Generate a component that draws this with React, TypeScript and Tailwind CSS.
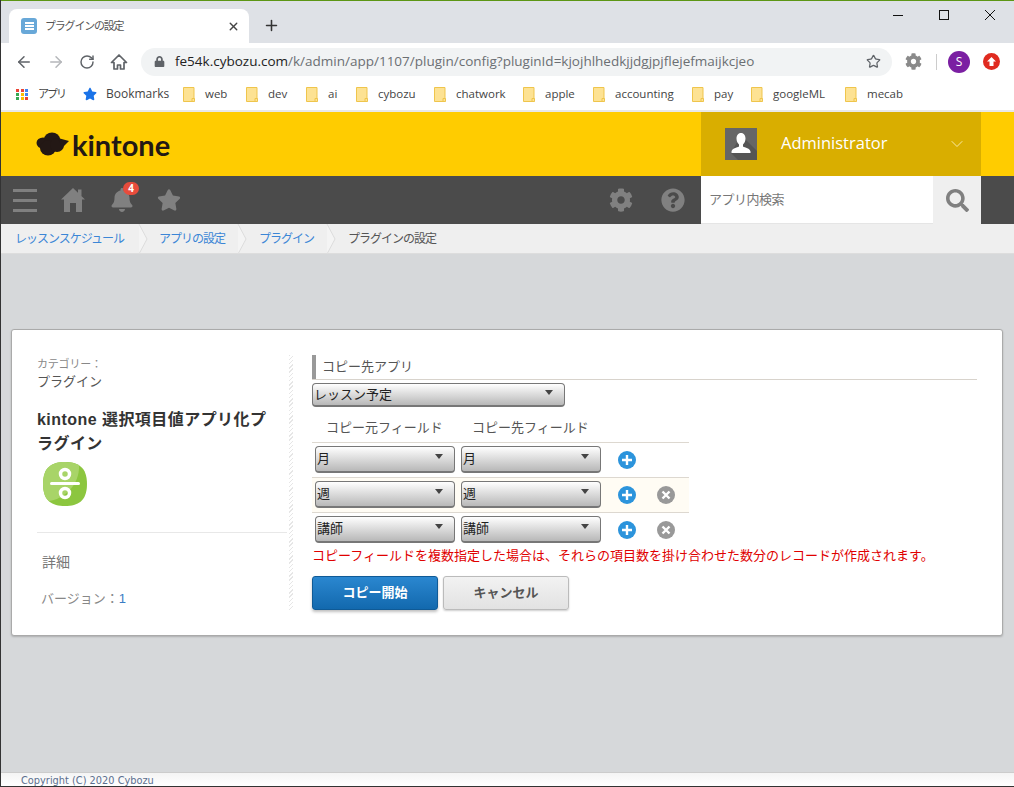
import { ArrowLeft, ArrowRight, ChevronDown, Plus, RotateCw, Star, X } from "lucide-react";
import { FaBell, FaCog, FaLock, FaQuestionCircle, FaSearch, FaStar } from "react-icons/fa";

const FONT = "font-['Open_Sans','Noto_Sans_CJK_JP',sans-serif]";
const JP = "font-['Liberation_Sans','Noto_Sans_CJK_JP',sans-serif]";

const folders = [
  ["web", "w-[63px]"],
  ["dev", "w-[60px]"],
  ["ai", "w-[50px]"],
  ["cybozu", "w-[78px]"],
  ["chatwork", "w-[89px]"],
  ["apple", "w-[70px]"],
  ["accounting", "w-[99px]"],
  ["pay", "w-[59px]"],
  ["googleML", "w-[94px]"],
  ["mecab", ""],
];

const Folder = () => (
  <svg width="12" height="15" viewBox="0 0 12 15" className="shrink-0">
    <path d="M.5.5h10.5v14H.5z" fill="#fde293" stroke="#efc54c" />
    <path d="M9 11.5h2.5v3H9z" fill="#fde293" stroke="#efc54c" />
  </svg>
);

const Select = ({ value, className }: { value: string; className: string }) => (
  <div className={`${className} flex items-center justify-between rounded-[4px] border border-[#777] border-b-2 bg-linear-to-b from-white to-[#b8b8b8] pl-[1px] pr-[11px] text-[13px] text-[#222] ${JP}`}>
    <span>{value}</span>
    <span className="mb-[5px] h-0 w-0 border-x-[4px] border-t-[5px] border-x-transparent border-t-[#444]" />
  </div>
);

const AddButton = () => (
  <svg width="18" height="18" viewBox="0 0 18 18" className="shrink-0">
    <circle cx="9" cy="9" r="9" fill="#2c94dc" />
    <path d="M4 9h10M9 4v10" stroke="#fff" strokeWidth="2.4" />
  </svg>
);

const RemoveButton = () => (
  <svg width="18" height="18" viewBox="0 0 18 18" className="ml-[21px] shrink-0">
    <circle cx="9" cy="9" r="9" fill="#999" />
    <path d="M5.5 5.5l7 7M12.5 5.5l-7 7" stroke="#fff" strokeWidth="2.4" />
  </svg>
);

const Row = ({ value, removable, tinted }: { value: string; removable?: boolean; tinted?: boolean }) => (
  <div className={`flex h-[35px] items-center border-t border-[#ddd8d0] pb-[1px] pl-[3px] ${tinted ? "bg-[#fffcf4]" : ""}`}>
    <Select value={value} className="h-[27px] w-[140px]" />
    <Select value={value} className="ml-[6px] h-[27px] w-[140px]" />
    <div className="ml-[17px] flex">
      <AddButton />
    </div>
    {removable && <RemoveButton />}
  </div>
);

const Crumb = () => (
  <svg width="10" height="30" viewBox="0 0 10 30" className="shrink-0">
    <path d="M1 0l8 15-8 15" fill="#f4f4f4" stroke="#dcdcdc" />
  </svg>
);

const App = () => {
  return (
    <div className={`flex h-[787px] w-[1014px] flex-col overflow-hidden border-l border-[#333] bg-[#d6d8da] ${FONT}`}>
      {/* browser chrome */}
      <div className="h-px w-full shrink-0 bg-[#5c9615]" />
      <div className="flex h-[42px] shrink-0 items-end bg-[#dee1e6] pl-[8px]">
        <div className="flex h-[34px] w-[240px] items-center rounded-t-[8px] bg-white pl-[12px] pr-[9px]">
          <div className="flex h-[16px] w-[16px] flex-col items-center justify-center gap-px rounded-[3px] bg-[#68a8d8]">
            <div className="h-[2px] w-[9px] bg-white" />
            <div className="h-[2px] w-[9px] bg-white" />
            <div className="h-[2px] w-[9px] bg-white" />
          </div>
          <span className={`ml-[8px] flex-1 text-[11px] tracking-[-1.2px] text-[#555] ${JP}`}>プラグインの設定</span>
          <X size={13} strokeWidth={2.5} className="text-[#444]" />
        </div>
        <Plus size={17} strokeWidth={2.2} className="mb-[9px] ml-[14px] text-[#333]" />
        <div className="mb-[21px] ml-auto mr-[19px] flex items-center gap-[36px] text-[#111]">
          <div className="h-px w-[10px] bg-[#111]" />
          <div className="h-[10px] w-[10px] border border-[#111]" />
          <svg width="10" height="14" viewBox="0 0 10 14">
            <path d="M0 2l10 10M10 2L0 12" stroke="#111" strokeWidth="1" />
          </svg>
        </div>
      </div>
      <div className="flex h-[37px] shrink-0 items-center bg-white pl-[14px] text-[#5f6368]">
        <ArrowLeft size={18} strokeWidth={2} />
        <ArrowRight size={18} strokeWidth={2} className="ml-[14px] text-[#b5b7ba]" />
        <RotateCw size={16} strokeWidth={2.2} className="ml-[14px]" />
        <svg width="18" height="18" viewBox="0 0 18 18" className="ml-[15px]">
          <path d="M1.500 9.500L9 2l7.500 7.500H14V16h-3.500v-4h-3v4H4V9.500z" fill="none" stroke="#5f6368" strokeWidth="1.700" strokeLinejoin="round" />
        </svg>
        <div className="ml-[13px] flex h-[28px] w-[751px] items-center rounded-full bg-[#f1f3f4] pl-[13px] pr-[11px]">
          <FaLock size={11} className="text-[#5f6368]" />
          <span className="ml-[10px] flex-1 text-[13.5px] text-[#6b6f73]">
            <span className="text-[#222]">fe54k.cybozu.com</span>/k/admin/app/1107/plugin/config?pluginId=kjojhlhedkjjdgjpjflejefmaijkcjeo
          </span>
          <Star size={15} strokeWidth={2} />
        </div>
        <FaCog size={17} className="ml-[13px] text-[#8a8a8a]" />
        <div className="ml-[14px] h-[16px] w-px bg-[#ccc]" />
        <div className="ml-[11px] flex h-[22px] w-[22px] items-center justify-center rounded-full bg-[#7b1fa2] text-[12px] text-white">S</div>
        <div className="ml-[13px] flex h-[17px] w-[17px] items-center justify-center rounded-full bg-[#e02b20]">
          <svg width="9" height="9" viewBox="0 0 9 9">
            <path d="M4.500 0L9 4.500H6.500V9h-4V4.500H0z" fill="#fff" />
          </svg>
        </div>
      </div>
      <div className={`flex h-[30px] shrink-0 items-center bg-white pb-[2px] pl-[15px] text-[11.5px] text-[#444] ${FONT}`}>
        <div className="grid w-[13px] grid-cols-3 gap-px">
          {["#ea4335", "#ea4335", "#4285f4", "#34a853", "#fbbc04", "#4285f4", "#34a853", "#fbbc04", "#ea4335"].map((c, i) => (
            <div key={i} className="h-[3px] w-[3px]" style={{ background: c }} />
          ))}
        </div>
        <span className={`ml-[9px] w-[45px] text-[11px] tracking-[-2px] ${JP}`}>アプリ</span>
        <FaStar size={14} className="text-[#1a73e8]" />
        <span className="ml-[9px] w-[77px] text-[12px]">Bookmarks</span>
        {folders.map(([name, width]) => (
          <div key={name} className={`flex shrink-0 items-center gap-[10px] ${width}`}>
            <Folder />
            <span>{name}</span>
          </div>
        ))}
      </div>

      {/* kintone header */}
      <div className="h-[2px] shrink-0 bg-[#e8e8e8]" />
      <div className="flex h-[64px] shrink-0 bg-[#ffcc00]">
        <div className="flex w-[700px] items-center pl-[35px]">
          <svg width="34" height="24" viewBox="0 0 34 24">
            <g fill="#231815">
              <ellipse cx="7" cy="11" rx="6.500" ry="5.500" />
              <ellipse cx="16" cy="7.500" rx="8" ry="7" />
              <ellipse cx="12" cy="16" rx="8" ry="7.500" />
              <ellipse cx="21" cy="13" rx="7" ry="7" />
              <path d="M22 6l11 3-7 7z" />
            </g>
          </svg>
          <span className="ml-[2px] font-['Lato',sans-serif] text-[29px] font-bold leading-none text-[#231815]">kintone</span>
        </div>
        <div className="flex w-[280px] items-center bg-[#d9ae00] pl-[24px]">
          <div className="flex h-[32px] w-[32px] items-center justify-center bg-[#666]">
            <svg width="32" height="32" viewBox="0 0 32 32">
              <path d="M6 25l10-18 16 16v9H13z" fill="#555" />
              <path d="M16 5c3 0 4.500 2.500 4.500 5.500 0 2.500-1 4.500-2.500 6v2c2 1 7 2 7.500 5v1.500h-19V23.500c.5-3 5.500-4 7.500-5v-2C12.500 15 11.500 13 11.500 10.500 11.500 7.500 13 5 16 5z" fill="#fff" />
            </svg>
          </div>
          <span className="mb-[2px] ml-[24px] text-[16.5px] text-white">Administrator</span>
          <ChevronDown size={20} strokeWidth={1} className="ml-[60px] text-[#fff5c4]" />
        </div>
      </div>
      <div className="flex h-[48px] shrink-0 items-center bg-[#4b4b4b] text-[#808080]">
        <div className="ml-[12px] flex w-[24px] flex-col gap-[7px]">
          <div className="h-[3px] bg-[#808080]" />
          <div className="h-[3px] bg-[#808080]" />
          <div className="h-[3px] bg-[#808080]" />
        </div>
        <svg width="24" height="24" viewBox="0 0 24 24" className="ml-[24px]">
          <path d="M12 0l12 11.500h-3V24h-6v-9H9v9H3V11.500H0zM17 1.500h3.500V8L17 5z" fill="#808080" />
        </svg>
        <div className="relative ml-[25px]">
          <FaBell size={24} />
          <span className="absolute -right-[5px] -top-[6px] flex h-[13px] w-[16px] items-center justify-center rounded-full bg-[#e74c3c] text-[10px] font-bold text-white">4</span>
        </div>
        <FaStar size={24} className="ml-[23px]" />
        <FaCog size={24} className="ml-auto" />
        <FaQuestionCircle size={24} className="ml-[28px]" />
        <div className="ml-[16px] flex h-full w-[232px] items-center bg-white pl-[8px] shadow-[inset_0_-1px_0_#e5e5e5]">
          <span className={`text-[13px] tracking-[-0.5px] text-[#777] ${JP}`}>アプリ内検索</span>
        </div>
        <div className="flex h-full w-[48px] items-center justify-center bg-[#efefef]">
          <FaSearch size={23} />
        </div>
        <div className="w-[33px]" />
      </div>
      <div className={`flex h-[30px] shrink-0 items-center border-b border-[#ddd] bg-[#efefef] pl-[14px] text-[12px] tracking-[-1px] ${JP}`}>
        <span className="w-[123px] text-[#3b86d6]">レッスンスケジュール</span>
        <Crumb />
        <span className="ml-[11px] w-[78px] text-[#3b86d6]">アプリの設定</span>
        <Crumb />
        <span className="ml-[12px] w-[67px] text-[#3b86d6]">プラグイン</span>
        <Crumb />
        <span className="ml-[12px] text-[#555]">プラグインの設定</span>
      </div>

      {/* page */}
      <div className={`flex-1 pl-[10px] pt-[75px] ${JP}`}>
        <div className="flex h-[307px] w-[992px] rounded-[3px] border border-[#aaa] bg-white pl-[25px] pt-[25px] shadow-[0_1px_2px_rgba(0,0,0,0.2)]">
          <div className="flex h-[255px] w-[252px] flex-col pt-[1px]">
            <div className="text-[11px] leading-[16px] tracking-[-0.2px] text-[#888]">カテゴリー：</div>
            <div className="text-[13px] leading-[19px] text-[#555]">プラグイン</div>
            <div className="mt-[17px] text-[16px] font-bold leading-[24px] tracking-[0.45px] text-[#333]">
              kintone 選択項目値アプリ化プ
              <br />
              ラグイン
            </div>
            <svg width="46" height="46" viewBox="0 0 46 46" className="ml-[5px] mt-[5px]">
              <path d="M23 1C36 1 45 6 45 23S36 45 23 45 1 40 1 23 10 1 23 1z" fill="#8cc63f" />
              <path d="M23 1C10 1 1 6 1 23c0 8 2 14 6 17C22 38 38 24 37 4 33 2 28 1 23 1z" fill="#a8d468" />
              <circle cx="23" cy="13" r="4.500" fill="none" stroke="#fff" strokeWidth="3.500" />
              <circle cx="23" cy="32" r="4.500" fill="none" stroke="#fff" strokeWidth="3.500" />
              <rect x="8" y="21" width="30" height="3" rx="1.500" fill="#fff" />
            </svg>
            <div className="mt-[25px] mr-[2px] border-t border-[#e8e8e8] pl-[5px] pt-[19px] text-[14px] leading-[20px] text-[#777]">詳細</div>
            <div className="mt-[17px] pl-[4px] text-[13px] leading-[20px] text-[#888]">
              バージョン：<span className="text-[#3b7cc4]">1</span>
            </div>
          </div>
          <div className="h-[255px] w-[4px] shrink-0 bg-[repeating-linear-gradient(135deg,#e6e6e6_0,#e6e6e6_1px,transparent_1px,transparent_3px)]" />
          <div className="ml-[19px] w-[665px]">
            <div className="border-b border-[#d8d3cc]">
              <div className="h-[24px] border-l-[4px] border-[#999] pl-[6px] text-[13px] leading-[24px] text-[#555]">コピー先アプリ</div>
            </div>
            <Select value="レッスン予定" className="mt-[3px] h-[24px] w-[253px]" />
            <div className="flex h-[35px] items-end pb-[5px] pl-[14px] text-[13px] leading-[18px] text-[#555]">
              <span className="w-[146px]">コピー元フィールド</span>
              <span>コピー先フィールド</span>
            </div>
            <div className="w-[377px]">
              <Row value="月" />
              <Row value="週" removable tinted />
              <Row value="講師" removable />
            </div>
            <div className="text-[13px] leading-[18px] text-[#e00000]">
              コピーフィールドを複数指定した場合は、それらの項目数を掛け合わせた数分のレコードが作成されます。
            </div>
            <div className="mt-[11px] flex gap-[5px]">
              <button className="h-[34px] w-[126px] rounded-[3px] border border-[#0f5a96] bg-linear-to-b from-[#2a87d0] to-[#1269ae] text-[13px] font-bold text-white shadow-[0_2px_3px_rgba(0,0,0,0.25)]">
                コピー開始
              </button>
              <button className="h-[34px] w-[126px] rounded-[3px] border border-[#bbb] bg-linear-to-b from-[#f2f2f2] to-[#e2e2e2] text-[13px] font-bold text-[#555] shadow-[0_1px_2px_rgba(0,0,0,0.2)]">
                キャンセル
              </button>
            </div>
          </div>
        </div>
      </div>

      {/* footer */}
      <div className="flex h-[15px] shrink-0 items-center border-t border-[#ccc] border-b border-b-[#333] bg-linear-to-b from-[#f4f4f4] to-white pl-[20px] pt-[3px] font-['DejaVu_Sans',sans-serif] text-[9.8px] text-[#5b6f8f]">
        Copyright (C) 2020 Cybozu
      </div>
    </div>
  );
};

export default App;
